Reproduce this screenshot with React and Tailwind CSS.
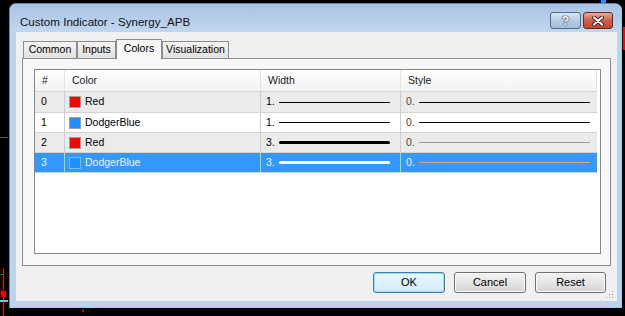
import React from "react";

const rows = [
  { id: 0, color: "Red", swatch: "#ff0000", width: 1, style: "odd" },
  { id: 1, color: "DodgerBlue", swatch: "#1e90ff", width: 1, style: "even" },
  { id: 2, color: "Red", swatch: "#ff0000", width: 3, style: "odd" },
  { id: 3, color: "DodgerBlue", swatch: "#1e90ff", width: 3, style: "selected" },
];

function ChartBackdrop() {
  return (
    <svg className="absolute inset-0" width="625" height="316">
      <line x1="0" y1="137.5" x2="8" y2="137.5" stroke="#5a5a5a" />
      <line x1="3.5" y1="268" x2="3.5" y2="316" stroke="#ff0000" />
      <rect x="1" y="274" width="3" height="1" fill="#00c000" />
      <rect x="1" y="291" width="5" height="6" fill="#ff0000" />
      <rect x="0" y="300" width="8" height="2" fill="#8fb6ea" />
      <rect x="82" y="309" width="2" height="3" fill="#c00000" />
      <rect x="601" y="0" width="5" height="3" fill="#1e90ff" />
      <line x1="624" y1="27" x2="624" y2="50" stroke="#ff0000" strokeWidth="2" />
    </svg>
  );
}

function TitleButtons() {
  return (
    <div className="flex gap-[2px] pt-[8px]">
      <div className="flex h-[17px] w-[31px] items-center justify-center rounded-[3px] border border-[#4f6b8c] bg-gradient-to-b from-[#dbe6f3] via-[#b7cbe3] to-[#a3bcda] text-[13px] font-bold leading-none text-white [text-shadow:0_0_1px_#22364f,0_0_1px_#22364f,0_0_1px_#22364f]">
        ?
      </div>
      <div className="flex h-[17px] w-[30px] items-center justify-center rounded-[3px] border border-[#6b2a1f] bg-gradient-to-b from-[#e9a99a] via-[#cf5f47] to-[#c2452c]">
        <svg width="14" height="10" viewBox="0 0 14 10">
          <path d="M3 1.5 L11 8.5 M11 1.5 L3 8.5" stroke="#3b1a14" strokeWidth="4" strokeLinecap="round" />
          <path d="M3 1.5 L11 8.5 M11 1.5 L3 8.5" stroke="#ffffff" strokeWidth="2.2" strokeLinecap="round" />
        </svg>
      </div>
    </div>
  );
}

function Tabs() {
  const tab =
    "flex h-[17px] items-center justify-center border border-b-0 border-[#898c95] bg-gradient-to-b from-[#f4f4f4] to-[#e1e1e1] text-[10.5px] text-black";
  return (
    <div className="flex h-[19px] items-end pl-[7px]">
      <div className={`${tab} w-[54px]`}>Common</div>
      <div className={`${tab} w-[39px]`}>Inputs</div>
      <div className="relative z-10 -mb-px flex h-[20px] w-[46px] items-center justify-center border border-b-0 border-[#898c95] bg-[#f7f7f7] pb-[2px] text-[10.5px] text-black">
        Colors
      </div>
      <div className={`${tab} w-[67px]`}>Visualization</div>
    </div>
  );
}

function Line({ thick, color }) {
  return (
    <div
      className={`flex-1 rounded-full ${thick ? "h-[3px]" : "h-px"}`}
      style={{ backgroundColor: color }}
    />
  );
}

function Row({ r }) {
  const sel = r.style === "selected";
  const bg = sel ? "bg-[#3399ff]" : r.style === "odd" ? "bg-[#ebebeb]" : "bg-white";
  const sep = sel ? "border-[#a9d1fb]" : "border-[#cdcdcd]";
  const txt = sel ? "text-[#eaf4ff]" : "text-black";
  const h = r.id === 0 ? "h-[21px]" : "h-[20px]";
  const wColor = sel ? "#ffffff" : "#000000";
  const sColor = sel ? "#d2a878" : r.id === 2 ? "#9a9a9a" : "#000000";
  return (
    <div className={`flex ${h} border-b border-[#d3d3d3] ${bg} ${txt} text-[10.5px]`}>
      <div className={`flex w-[30px] items-center border-r ${sep} pl-[6px]`}>{r.id}</div>
      <div className={`flex w-[196px] items-center gap-[4px] border-r ${sep} pl-[4px]`}>
        <span
          className={`h-[12px] w-[12px] border ${sel ? "border-[#7fbcff]" : "border-[#a0a0a0]"}`}
          style={{ backgroundColor: r.swatch }}
        />
        <span>{r.color}</span>
      </div>
      <div className={`flex w-[140px] items-center gap-[4px] border-r ${sep} pl-[5px] pr-[10px]`}>
        <span>{r.width}.</span>
        <Line thick={r.width === 3} color={wColor} />
      </div>
      <div className="flex w-[196px] items-center gap-[4px] pl-[5px] pr-[7px]">
        <span className={sel ? "text-[#eaf4ff]" : "text-[#5c4314]"}>0.</span>
        <Line color={sColor} />
      </div>
    </div>
  );
}

function ColorTable() {
  const head = "flex items-center border-r border-[#e3e3e3] pl-[7px]";
  return (
    <div className="ml-[11px] mr-[9px] mt-[10px] h-[185px] border border-[#828790] bg-white">
      <div className="w-[562px]">
        <div className="flex h-[22px] border-b border-[#d5d5d5] bg-gradient-to-b from-white to-[#f2f3f5] text-[10.5px] text-[#1a1a1a]">
          <div className={`${head} w-[30px]`}>#</div>
          <div className={`${head} w-[196px]`}>Color</div>
          <div className={`${head} w-[140px]`}>Width</div>
          <div className={`${head} w-[196px]`}>Style</div>
        </div>
        {rows.map((r) => (
          <Row key={r.id} r={r} />
        ))}
      </div>
    </div>
  );
}

function DlgButton({ children, primary }) {
  return (
    <div
      className={`flex h-[21px] items-center justify-center rounded-[3px] border text-[11px] text-black ${
        primary
          ? "border-[#3c7fb1] bg-gradient-to-b from-[#eaf6fd] to-[#d4ebf7] shadow-[inset_0_0_0_1px_#9fdcf7]"
          : "border-[#707070] bg-gradient-to-b from-[#f2f2f2] via-[#e6e6e6] to-[#d4d4d4] shadow-[inset_0_0_0_1px_#fbfbfb]"
      } ${children === "Reset" ? "w-[71px]" : "w-[72px]"}`}
    >
      {children}
    </div>
  );
}

export default function App() {
  return (
    <div
      className="relative h-[316px] w-[625px] overflow-hidden bg-black pl-[9px] pt-[3px]"
      style={{ fontFamily: '"Liberation Sans", Arial, sans-serif' }}
    >
      <ChartBackdrop />
      <div className="relative z-10 flex h-[305px] w-[613px] flex-col rounded-t-[7px] border border-[#6d85a0] border-b-[#7fd8ef] border-r-[#7fd8ef] bg-[#bcd3ec]">
        <div className="flex h-[28px] justify-between rounded-t-[6px] bg-gradient-to-b from-[#a9c4e4] to-[#c1d6ee] pl-[10px] pr-[8px]">
          <div className="pt-[9px] text-[11.6px] text-[#111]">Custom Indicator - Synergy_APB</div>
          <TitleButtons />
        </div>
        <div className="relative mb-[6px] ml-[6px] mr-[4px] flex-1 bg-[#f0f0f0]">
          <div className="pt-[7px]">
            <Tabs />
            <div className="ml-[6px] flex h-[208px] w-[589px] flex-col border border-[#898c95] bg-[#f7f7f7]">
              <ColorTable />
            </div>
            <div className="mr-[11px] mt-[6px] flex justify-end gap-[9px]">
              <DlgButton primary>OK</DlgButton>
              <DlgButton>Cancel</DlgButton>
              <DlgButton>Reset</DlgButton>
            </div>
          </div>
          <svg className="absolute bottom-[2px] right-[3px]" width="8" height="8" viewBox="0 0 8 8">
            <rect x="6" y="0" width="1" height="1" fill="#9c9c9c" />
            <rect x="3" y="3" width="1" height="1" fill="#9c9c9c" />
            <rect x="6" y="3" width="1" height="1" fill="#9c9c9c" />
            <rect x="0" y="6" width="1" height="1" fill="#9c9c9c" />
            <rect x="3" y="6" width="1" height="1" fill="#9c9c9c" />
            <rect x="6" y="6" width="1" height="1" fill="#9c9c9c" />
          </svg>
        </div>
      </div>
    </div>
  );
}
